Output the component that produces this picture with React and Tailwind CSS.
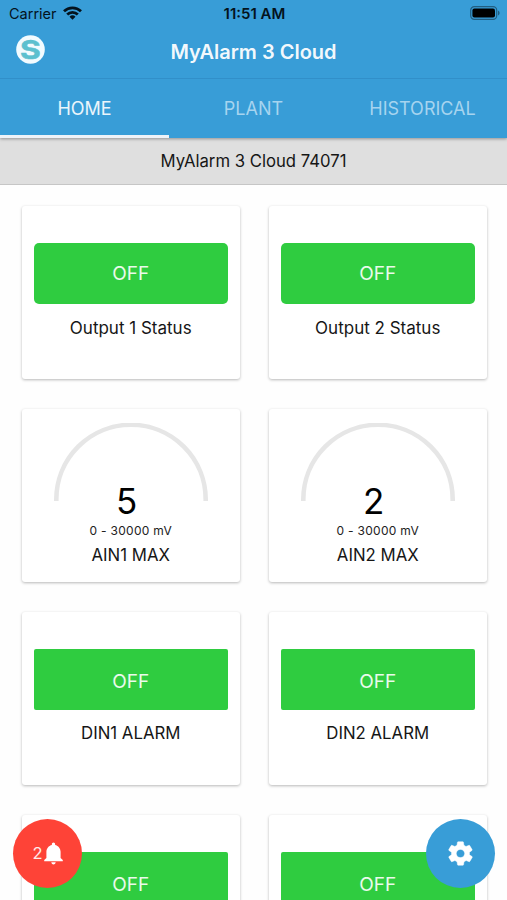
import { useState } from 'react';
import { IoMdNotifications, IoMdSettings } from 'react-icons/io';

const TABS = ['HOME', 'PLANT', 'HISTORICAL'];

const WIDGETS = [
  { id: 'out1', type: 'switch', label: 'Output 1 Status', value: 'OFF', output: true },
  { id: 'out2', type: 'switch', label: 'Output 2 Status', value: 'OFF', output: true },
  { id: 'ain1', type: 'gauge', label: 'AIN1 MAX', value: 5, range: '0 - 30000 mV' },
  { id: 'ain2', type: 'gauge', label: 'AIN2 MAX', value: 2, range: '0 - 30000 mV' },
  { id: 'din1', type: 'switch', label: 'DIN1 ALARM', value: 'OFF' },
  { id: 'din2', type: 'switch', label: 'DIN2 ALARM', value: 'OFF' },
  { id: 'din3', type: 'switch', value: 'OFF' },
  { id: 'din4', type: 'switch', value: 'OFF' },
];

function StatusBar() {
  return (
    <div className="grid h-7 grid-cols-3 items-center pr-[7px] pl-[9px] text-[#04131d]">
      <div className="flex items-center gap-[6px]">
        <span className="text-[14.5px] leading-none">Carrier</span>
        <svg className="-mt-[2px] h-[14px] w-[19px]" viewBox="0 0 19 14" fill="none" stroke="currentColor" strokeWidth="2.8">
          <path d="M1 5.2a12.3 12.3 0 0 1 17 0" />
          <path d="M4.2 8.6a7.6 7.6 0 0 1 10.6 0" />
          <path d="M9.5 13.8l-3-3a4.3 4.3 0 0 1 6 0z" fill="currentColor" stroke="none" />
        </svg>
      </div>
      <span className="-mt-px text-center text-[15px] leading-none font-semibold whitespace-nowrap">11:51 AM</span>
      <svg className="-mt-[2px] h-[14px] w-[30px] justify-self-end" viewBox="0 0 30 14">
        <rect x="0.7" y="0.7" width="26" height="12.6" rx="3.6" fill="none" stroke="#000" strokeOpacity="0.4" strokeWidth="1.2" />
        <rect x="2.4" y="2.4" width="22.6" height="9.2" rx="2" fill="#000" />
        <path d="M28 4.6v4.8c1-.5 1.6-1.4 1.6-2.4s-.6-1.9-1.6-2.4z" fill="#000" fillOpacity="0.4" />
      </svg>
    </div>
  );
}

function Logo() {
  return (
    <svg className="h-[29px] w-[29px]" viewBox="0 0 29 29">
      <circle cx="14.5" cy="14.5" r="14.3" fill="#f2fbff" />
      <text
        transform="translate(14.3 23.8) scale(1.22 1)"
        textAnchor="middle"
        fontSize="26"
        fontWeight="700"
        fill="#5cc0cf"
        stroke="#5cc0cf"
        strokeWidth="0.5"
      >
        S
      </text>
    </svg>
  );
}

function SwitchWidget({ label, value, output }) {
  return (
    <>
      <div
        className={`flex h-[61px] items-center justify-center bg-[#2fcc40] text-[19px] text-white/90 ${
          output ? 'mt-[37px] rounded-[5px] pt-[2px]' : 'mt-[36.5px] rounded-[2px] pt-[6px]'
        }`}
      >
        {value}
      </div>
      {label && (
        <p className={`mt-[11.5px] text-center leading-6 ${output ? 'text-[17px]' : 'text-[16.8px]'}`}>{label}</p>
      )}
    </>
  );
}

function GaugeWidget({ label, value, range }) {
  return (
    <div className="flex flex-col items-center">
      <svg className="mt-[14px] ml-px h-[78px] w-[154px]" viewBox="0 0 154 78">
        <path d="M2.3 78V76.5a74.7 74.7 0 0 1 149.4 0V78" fill="none" stroke="#e6e6e6" strokeWidth="4.6" />
      </svg>
      <span className="-mt-[18px] mr-[8px] text-[35px] leading-[36px] text-black">{value}</span>
      <span className="mt-[4px] text-[12px] leading-4 tracking-[0.3px] text-[#222]">{range}</span>
      <span className="mt-[3.5px] text-[16.8px] leading-6">{label}</span>
    </div>
  );
}

function Card({ widget }) {
  return (
    <div className="h-[173px] rounded-[3px] bg-white px-[12px] shadow-[0_1px_3px_rgba(0,0,0,0.28)]">
      {widget.type === 'gauge' ? <GaugeWidget {...widget} /> : <SwitchWidget {...widget} />}
    </div>
  );
}

export default function App() {
  const [tab, setTab] = useState('HOME');

  return (
    <div className="relative flex h-screen flex-col overflow-hidden bg-[#fefefe] font-['Inter',sans-serif] text-[#161616]">
      <header className="z-10 shrink-0 bg-[#389dd7] shadow-[0_1px_3px_rgba(0,0,0,0.35)]">
        <StatusBar />
        <div className="grid h-[51px] grid-cols-[60px_1fr_60px] items-center border-b border-[#318fc9] pb-[6px]">
          <div className="-mt-px pl-4">
            <Logo />
          </div>
          <h1 className="pt-[3px] text-center text-[20px] font-semibold text-white/95">MyAlarm 3 Cloud</h1>
        </div>
        <nav className="grid h-[58.5px] grid-cols-3">
          {TABS.map(name => (
            <button
              key={name}
              onClick={() => setTab(name)}
              className={`border-b-[3px] pt-[3px] text-[18px] ${
                tab === name ? 'border-[#eef3f8] text-white/90' : 'border-transparent text-[#a6d4ef]'
              }`}
            >
              {name}
            </button>
          ))}
        </nav>
      </header>

      <div className="flex h-[47.5px] shrink-0 items-center justify-center border-b border-[#c6c6c6] bg-[#dfdfdf] pt-[2px] text-[16.7px]">
        MyAlarm 3 Cloud 74071
      </div>

      <main className="grid min-h-0 flex-1 grid-cols-[217.5px_217.5px] content-start gap-x-[29.5px] gap-y-[30px] overflow-hidden pt-[21px] pl-[22px]">
        {WIDGETS.map(w => (
          <Card key={w.id} widget={w} />
        ))}
      </main>

      {/* Floating actions */}
      <button className="absolute bottom-[12px] left-[13px] flex h-[69px] w-[69px] items-center justify-center rounded-full bg-[#fe4337] text-white">
        <span className="text-[16.5px] text-white/90">2</span>
        <IoMdNotifications className="-mr-[4px] -ml-[3px] h-[27px] w-[27px]" />
      </button>
      <button className="absolute right-[12.5px] bottom-[12px] flex h-[69px] w-[69px] items-center justify-center rounded-full bg-[#389dd7] text-white">
        <IoMdSettings className="h-[29px] w-[29px] stroke-white stroke-[8px]" />
      </button>
    </div>
  );
}
